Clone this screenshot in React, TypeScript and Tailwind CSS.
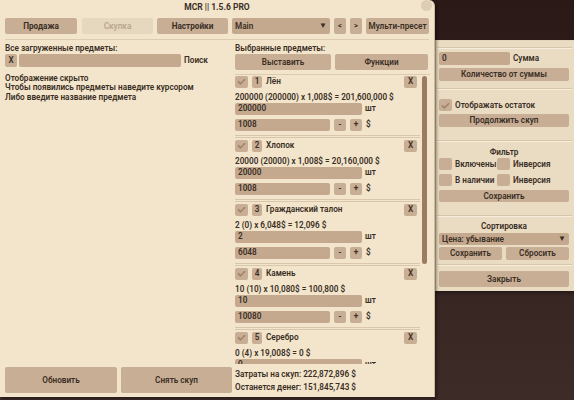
import React from "react";

const btn = "flex items-center justify-center whitespace-nowrap rounded-[2px] bg-[#c8ae94] text-[#3b2f26]";
const input = "flex items-center whitespace-nowrap rounded-[2px] bg-[#c4a98e] pl-[3px] text-[#3b2f26]";

function Check({ checked = false }: { checked?: boolean }) {
  return (
    <div className="flex h-[12px] w-[13px] shrink-0 items-center justify-center rounded-[2px] bg-[#c8ae94]">
      {checked && (
        <svg width="9" height="7" viewBox="0 0 9 7">
          <path d="M1 3.4 L3.4 5.8 L8 1.2" stroke="#a0836a" strokeWidth="1.6" fill="none" />
        </svg>
      )}
    </div>
  );
}

function Sep({ className = "" }: { className?: string }) {
  return (
    <div className={`flex flex-col ${className}`}>
      <div className="h-[1px] bg-[#d6c5a9]" />
      <div className="h-[1px] bg-[#f6eddc]" />
    </div>
  );
}

type Item = { n: number; name: string; formula: string; qty: string; price: string };

const items: Item[] = [
  { n: 1, name: "Лён", formula: "200000 (200000) x 1,008$ = 201,600,000 $", qty: "200000", price: "1008" },
  { n: 2, name: "Хлопок", formula: "20000 (20000) x 1,008$ = 20,160,000 $", qty: "20000", price: "1008" },
  { n: 3, name: "Гражданский талон", formula: "2 (0) x 6,048$ = 12,096 $", qty: "2", price: "6048" },
  { n: 4, name: "Камень", formula: "10 (10) x 10,080$ = 100,800 $", qty: "10", price: "10080" },
  { n: 5, name: "Серебро", formula: "0 (4) x 19,008$ = 0 $", qty: "0", price: "19008" },
];

// last row is scrolled out of view, only its top part shows
function ItemRow({ item, last = false }: { item: Item; last?: boolean }) {
  return (
    <div className="flex flex-col">
      <div className="flex h-[12px] items-center">
        <Check checked />
        <div className={`${btn} ml-[4px] h-[12px] w-[10px]`}>{item.n}</div>
        <span className="ml-[4px]">{item.name}</span>
        <div className={`${btn} ml-auto mr-[3px] h-[12px] w-[13px]`}>X</div>
      </div>
      <div className="mt-[3px] h-[12px] whitespace-nowrap leading-[12px]">{item.formula}</div>
      <div className="flex h-[12px] items-center">
        <div className={`${input} h-full w-[127px]`}>{item.qty}</div>
        <span className="ml-[3px]">шт</span>
      </div>
      {!last && (
        <>
          <div className="mt-[4px] flex h-[12px] items-center">
            <div className={`${input} h-full w-[95px]`}>{item.price}</div>
            <div className={`${btn} ml-[4px] h-full w-[12px]`}>-</div>
            <div className={`${btn} ml-[4px] h-full w-[12px]`}>+</div>
            <span className="ml-[4px]">$</span>
          </div>
          <div className="mt-[4px] h-[3px] border-y border-[#d8c7ab]" />
          <div className="h-[2px]" />
        </>
      )}
    </div>
  );
}

export default function App() {
  return (
    <div className="flex h-[400px] w-[574px] overflow-hidden bg-gradient-to-b from-[#2a1917] to-[#3c2b27] font-['Roboto',sans-serif] text-[8.2px] font-semibold text-[#3a2e25]">
      {/* Main window */}
      <div className="relative flex h-[397px] w-[435px] shrink-0 flex-col rounded-tr-[6px] border-r border-[#cdb99c] bg-[#f2e5cb] shadow-[2px_2px_3px_rgba(0,0,0,0.35)]">
        <div className="absolute right-[2px] top-0 h-[11px] w-[11px] rounded-full bg-[#dccdb4]" />
        <div className="h-[14px] text-center text-[8.5px] font-bold leading-[14px]">MCR || 1.5.6 PRO</div>

        {/* Tabs */}
        <div className="mt-[4px] flex h-[16px] pl-[5px] font-bold">
          <div className={`${btn} w-[72px]`}>Продажа</div>
          <div className="ml-[5px] flex w-[71px] items-center justify-center rounded-[2px] bg-[#e6d8be] font-semibold text-[#b9a790]">Скупка</div>
          <div className={`${btn} ml-[4px] w-[71px]`}>Настройки</div>
          <div className={`${input} ml-[4px] w-[98px] justify-between pr-[3px] font-semibold`}>
            <span>Main</span>
            <span className="text-[8px]">▼</span>
          </div>
          <div className={`${btn} ml-[4px] w-[12px] text-[7.5px]`}>&lt;</div>
          <div className={`${btn} ml-[4px] w-[12px] text-[7.5px]`}>&gt;</div>
          <div className={`${btn} ml-[4px] w-[63px] font-semibold`}>Мульти-пресет</div>
        </div>

        <div className="mx-[5px] mt-[5px] h-[1px] bg-[#dccbb0]" />

        <div className="flex min-h-0 flex-1">
          {/* Left column */}
          <div className="flex w-[232px] shrink-0 flex-col pl-[5px]">
            <div className="mt-[2px] h-[12px] leading-[12px]">Все загруженные предметы:</div>
            <div className="flex h-[13px] items-center">
              <div className={`${btn} h-full w-[12px]`}>X</div>
              <div className={`${input} ml-[2px] h-full w-[162px]`} />
              <span className="ml-[3px]">Поиск</span>
            </div>
            <div className="mt-[7px] leading-[9.3px]">
              <div>Отображение скрыто</div>
              <div>Чтобы появились предметы наведите курсором</div>
              <div>Либо введите название предмета</div>
            </div>
            <div className="mb-[4px] mt-auto flex h-[26px] gap-[4px]">
              <div className={`${btn} w-[112px]`}>Обновить</div>
              <div className={`${btn} w-[111px]`}>Снять скуп</div>
            </div>
          </div>

          {/* Right column */}
          <div className="ml-[3px] flex w-[195px] flex-col">
            <div className="mt-[2px] h-[12px] leading-[12px]">Выбранные предметы:</div>
            <div className="flex h-[16px] gap-[4px]">
              <div className={`${btn} w-[96px]`}>Выставить</div>
              <div className={`${btn} w-[93px]`}>Функции</div>
            </div>
            <div className="mt-[4px] h-[1px] bg-[#dccbb0]" />
            <div className="mt-[0.5px] flex h-[288.5px] overflow-hidden">
              <div className="flex w-[185px] shrink-0 flex-col">
                {items.map((it, i) => (
                  <ItemRow key={it.n} item={it} last={i === items.length - 1} />
                ))}
              </div>
              <div className="ml-[2px] h-[188px] w-[5px] rounded-full bg-[#9b7b61]" />
            </div>
            <div className="mt-[4px] leading-[12.5px]">
              <div>Затраты на скуп: 222,872,896 $</div>
              <div>Останется денег: 151,845,743 $</div>
            </div>
          </div>
        </div>
      </div>

      {/* Side panel */}
      <div className="flex flex-1 flex-col pt-[40px]">
        <div className="flex h-[251px] flex-col border-l border-t border-l-[#cbb698] border-t-[#e3d4ba] bg-[#e9dcc3] pb-[4px] pl-[3px] pr-[5px] shadow-[0_2px_3px_rgba(0,0,0,0.4)]">
          <Sep className="-ml-[2px] -mr-[3px] mt-[6px]" />
          <div className="mt-[3px] flex h-[13px] items-center">
            <div className={`${input} h-full w-[71px]`}>0</div>
            <span className="ml-[3px]">Сумма</span>
          </div>
          <div className={`${btn} mt-[3px] h-[13px]`}>Количество от суммы</div>
          <Sep className="-ml-[2px] -mr-[3px] mt-[7px]" />
          <div className="mt-[9px] flex h-[12px] items-center">
            <Check checked />
            <span className="ml-[3px] whitespace-nowrap">Отображать остаток</span>
          </div>
          <div className={`${btn} mt-[3px] h-[13px]`}>Продолжить скуп</div>
          <Sep className="-ml-[2px] -mr-[3px] mt-[13px]" />
          <div className="mt-[4px] h-[12px] text-center leading-[12px]">Фильтр</div>
          <div className="flex h-[12px] items-center whitespace-nowrap">
            <Check />
            <span className="ml-[3px] w-[42px]">Включены</span>
            <Check />
            <span className="ml-[3px]">Инверсия</span>
          </div>
          <div className="mt-[4px] flex h-[12px] items-center whitespace-nowrap">
            <Check />
            <span className="ml-[3px] w-[42px]">В наличии</span>
            <Check />
            <span className="ml-[3px]">Инверсия</span>
          </div>
          <div className={`${btn} mt-[4px] h-[12px]`}>Сохранить</div>
          <Sep className="-ml-[2px] -mr-[3px] mt-[13px]" />
          <div className="mt-[3px] h-[12px] text-center leading-[12px]">Сортировка</div>
          <div className={`${input} mt-[1px] h-[12px] justify-between pr-[3px]`}>
            <span>Цена: убывание</span>
            <span className="text-[8px]">▼</span>
          </div>
          <div className="mt-[2px] flex h-[13px] gap-[4px]">
            <div className={`${btn} flex-1`}>Сохранить</div>
            <div className={`${btn} flex-1`}>Сбросить</div>
          </div>
          <Sep className="-ml-[2px] -mr-[3px] mt-[4px]" />
          <div className={`${btn} mt-[5px] h-[16px]`}>Закрыть</div>
        </div>
      </div>
    </div>
  );
}
